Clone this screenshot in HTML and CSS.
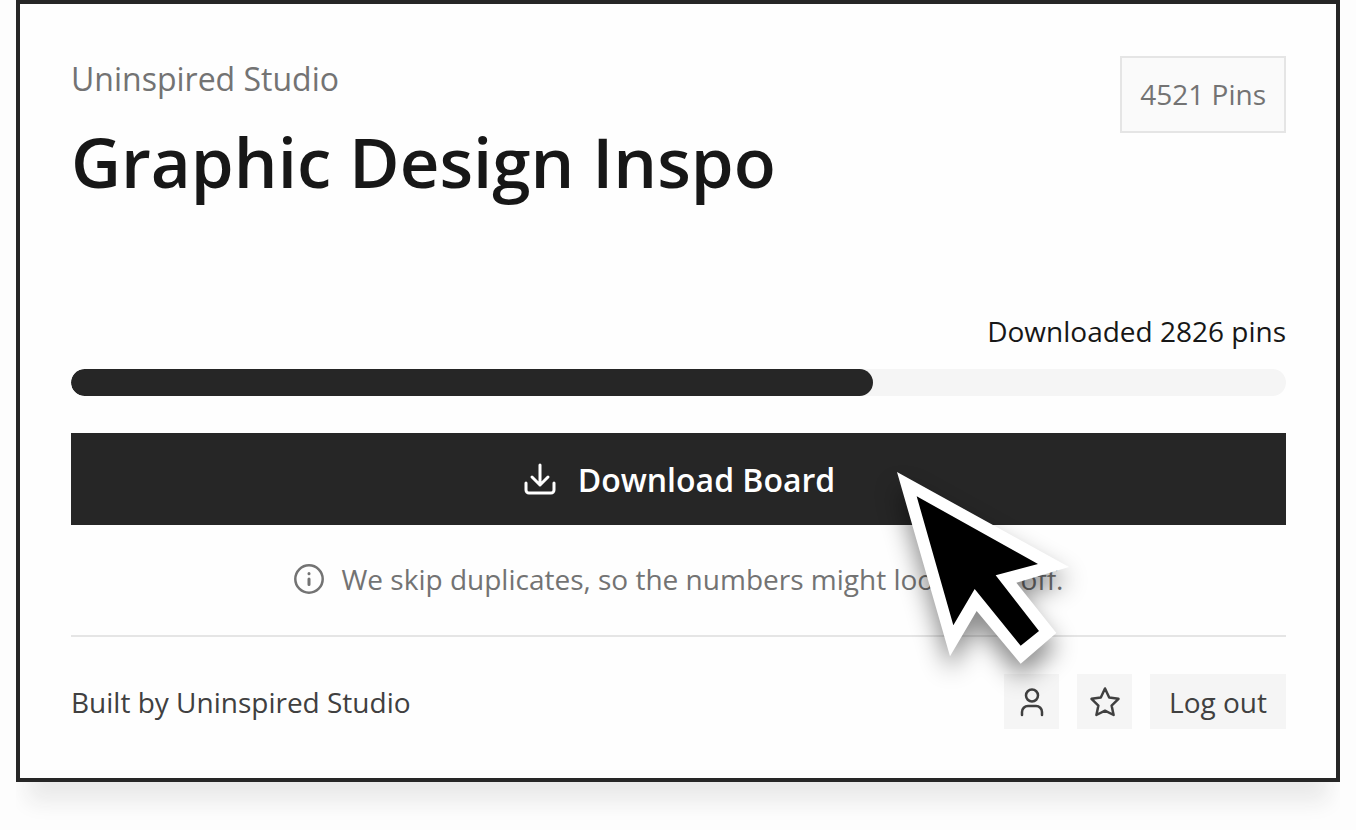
FILE: index.html
```
<!DOCTYPE html>
<html lang="en">
    <head>
        <meta charset="UTF-8">
        <meta name="viewport" content="width=device-width, initial-scale=1">
        <title>Graphic Design Inspo</title>
        <link rel="stylesheet" href="styles.css">
    </head>
    <body>

        <main class="card">
            <header class="header">
                <div>
                    <p class="owner">Uninspired Studio</p>
                    <h1 class="title">Graphic Design Inspo</h1>
                </div>
                <span class="badge">4521 Pins</span>
            </header>

            <section class="download">
                <label class="status" for="progress">Downloaded 2826 pins</label>
                <progress class="progress" id="progress" value="66" max="100"></progress>

                <div class="action">
                    <button type="button" class="btn-main">
                        <svg class="icon-download" viewBox="0 0 36 36" aria-hidden="true">
                            <path d="M18 4v20M10 16l8 8 8-8M4 22v7a3 3 0 0 0 3 3h22a3 3 0 0 0 3-3v-7"/>
                        </svg>
                        Download Board
                    </button>

                    <!-- mouse pointer over the button -->
                    <svg class="pointer" viewBox="0 0 516 576" aria-hidden="true">
                        <path fill="#fff" d="M0 0L516 285L358 332L478 483L371 575L239 417L159 553Z"/>
                        <path fill="#000" d="M59 73L423 276L296 310L426 477L371 521L233 351L169 460Z"/>
                    </svg>
                </div>

                <p class="note">
                    <svg class="icon-info" viewBox="0 0 30 30" aria-hidden="true">
                        <circle cx="15" cy="15" r="13.7"/>
                        <path class="icon-info-mark" d="M15 15v5.5M15 9.6v.2"/>
                    </svg>
                    We skip duplicates, so the numbers might look a bit off.
                </p>
            </section>

            <footer class="footer">
                <p class="credit">Built by Uninspired Studio</p>
                <div class="tools">
                    <button type="button" class="btn btn-icon" aria-label="Account">
                        <svg viewBox="0 0 32 32" aria-hidden="true">
                            <circle cx="16" cy="9.5" r="6"/>
                            <path d="M6 29v-3a6 6 0 0 1 6-6h8a6 6 0 0 1 6 6v3"/>
                        </svg>
                    </button>
                    <button type="button" class="btn btn-icon" aria-label="Rate">
                        <svg viewBox="0 0 32 32" aria-hidden="true">
                            <path d="M16 2.5L20.2 11.6L29.5 12.8L22.6 19.6L24.6 29L16 24.7L7.4 29L9.4 19.6L2.5 12.8L11.8 11.6Z"/>
                        </svg>
                    </button>
                    <button type="button" class="btn">Log out</button>
                </div>
            </footer>
        </main>

    </body>
</html>
```
FILE: styles.css
```
* {
    box-sizing: border-box;
}

body {
    min-height: 100vh;
    margin: 0 16px;
    font-family: 'Open Sans', sans-serif;
    font-size: 28px;
    line-height: 38px;
    color: #171717;
    background-color: #fdfdfd;
}

p, h1 {
    margin: 0;
}

button {
    border: none;
    font-family: inherit;
    cursor: pointer;
}

svg {
    fill: none;
    stroke: currentColor;
    stroke-linecap: round;
    stroke-linejoin: round;
}

.card {
    padding: 52px 50px 49px 51px;
    border: 4px solid #262626;
    background-color: #fefefe;
    box-shadow: 0 32px 20px -12px #eaeaea;
}

.header {
    display: flex;
    justify-content: space-between;
    align-items: flex-start;
    margin-bottom: 109px;
}

.owner {
    margin-bottom: 17px;
    font-size: 32px;
    line-height: 46px;
    color: #737373;
}

.title {
    font-size: 69px;
    font-weight: 600;
    line-height: 84px;
}

.badge {
    padding: 17px 18px 18px;
    border: 2px solid #e5e5e5;
    color: #737373;
    background-color: #fafafa;
}

.download {
    display: flex;
    flex-direction: column;
}

.status {
    align-self: flex-end;
    margin-bottom: 19px;
}

.progress {
    appearance: none;
    width: 100%;
    height: 27px;
    border: none;
    border-radius: 14px;
    overflow: hidden;
    background-color: #f5f5f5;
}

.progress::-webkit-progress-bar {
    background-color: #f5f5f5;
}

.progress::-webkit-progress-value {
    border-radius: 14px;
    background-color: #262626;
}

.progress::-moz-progress-bar {
    border-radius: 14px;
    background-color: #262626;
}

.action {
    position: relative;
    margin: 37px 0 35px;
}

.btn-main {
    display: flex;
    justify-content: center;
    align-items: center;
    gap: 20px;
    width: 100%;
    height: 92px;
    font-size: 32px;
    font-weight: 600;
    color: #fff;
    background-color: #262626;
}

.icon-download {
    width: 36px;
    height: 36px;
    stroke-width: 3;
}

.pointer {
    position: absolute;
    top: 39px;
    left: 68%;
    z-index: 1;
    width: 172px;
    height: 192px;
    overflow: visible;
    stroke: none;
    filter: drop-shadow(0 14px 12px rgba(0, 0, 0, 0.45));
    pointer-events: none;
}

.note {
    display: flex;
    justify-content: center;
    align-items: center;
    gap: 18px;
    margin-bottom: 37px;
    color: #737373;
}

.icon-info {
    width: 30px;
    height: 30px;
    stroke-width: 2.5;
}

.icon-info-mark {
    stroke-width: 3;
}

.footer {
    display: flex;
    justify-content: space-between;
    align-items: center;
    padding-top: 37px;
    border-top: 2px solid #e5e5e5;
    color: #404040;
}

.tools {
    display: flex;
    gap: 18px;
}

.btn {
    height: 55px;
    padding: 0 19px;
    font-size: 28px;
    font-weight: 500;
    color: #404040;
    background-color: #f5f5f5;
}

.btn-icon {
    display: flex;
    justify-content: center;
    align-items: center;
    width: 55px;
    padding: 0;
}

.btn-icon svg {
    width: 32px;
    height: 32px;
    stroke-width: 2.5;
}

.btn:hover {
    background-color: #e5e5e5;
}
```
